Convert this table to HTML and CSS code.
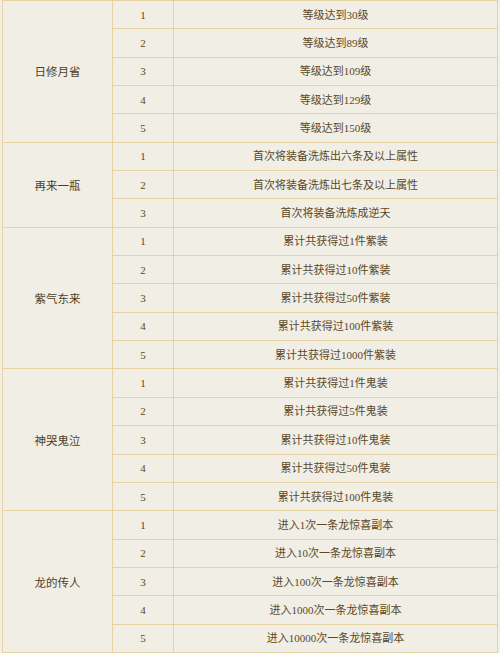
FILE: index.html
```html
<!DOCTYPE html>
<html lang="zh">
<head>
<meta charset="utf-8">
<title>成就</title>
<link rel="stylesheet" href="styles.css">
</head>
<body>
<table class="tbl">
  <tr><td class="name" rowspan="5">日修月省</td><td class="num">1</td><td class="desc">等级达到30级</td></tr>
  <tr><td class="num">2</td><td class="desc">等级达到89级</td></tr>
  <tr><td class="num">3</td><td class="desc">等级达到109级</td></tr>
  <tr><td class="num">4</td><td class="desc">等级达到129级</td></tr>
  <tr><td class="num">5</td><td class="desc">等级达到150级</td></tr>

  <tr><td class="name" rowspan="3">再来一瓶</td><td class="num">1</td><td class="desc">首次将装备洗炼出六条及以上属性</td></tr>
  <tr><td class="num">2</td><td class="desc">首次将装备洗炼出七条及以上属性</td></tr>
  <tr><td class="num">3</td><td class="desc">首次将装备洗炼成逆天</td></tr>

  <tr><td class="name" rowspan="5">紫气东来</td><td class="num">1</td><td class="desc">累计共获得过1件紫装</td></tr>
  <tr><td class="num">2</td><td class="desc">累计共获得过10件紫装</td></tr>
  <tr><td class="num">3</td><td class="desc">累计共获得过50件紫装</td></tr>
  <tr><td class="num">4</td><td class="desc">累计共获得过100件紫装</td></tr>
  <tr><td class="num">5</td><td class="desc">累计共获得过1000件紫装</td></tr>

  <tr><td class="name" rowspan="5">神哭鬼泣</td><td class="num">1</td><td class="desc">累计共获得过1件鬼装</td></tr>
  <tr><td class="num">2</td><td class="desc">累计共获得过5件鬼装</td></tr>
  <tr><td class="num">3</td><td class="desc">累计共获得过10件鬼装</td></tr>
  <tr><td class="num">4</td><td class="desc">累计共获得过50件鬼装</td></tr>
  <tr><td class="num">5</td><td class="desc">累计共获得过100件鬼装</td></tr>

  <tr><td class="name" rowspan="5">龙的传人</td><td class="num">1</td><td class="desc">进入1次一条龙惊喜副本</td></tr>
  <tr><td class="num">2</td><td class="desc">进入10次一条龙惊喜副本</td></tr>
  <tr><td class="num">3</td><td class="desc">进入100次一条龙惊喜副本</td></tr>
  <tr><td class="num">4</td><td class="desc">进入1000次一条龙惊喜副本</td></tr>
  <tr><td class="num">5</td><td class="desc">进入10000次一条龙惊喜副本</td></tr>
</table>
</body>
</html>
```

FILE: styles.css
```css
html, body {
  margin: 0;
  padding: 0;
  background: #f1eee6;
}
body {
  padding: 0 2px;
  font-family: "Liberation Serif", "Noto Sans CJK SC", serif;
  color: #5a4826;
}
.tbl {
  width: 496px;
  border-collapse: collapse;
  border: 1px solid #e7d3a2;
  table-layout: fixed;
}
.tbl tr {
  height: 28.35px;
}
.tbl td {
  border: 1px solid #e7d3a2;
  padding: 0;
  text-align: center;
  vertical-align: middle;
  font-size: 11px;
  line-height: 14px;
  background: #f1eee6;
}
.tbl .name {
  width: 109px;
  font-family: "Noto Sans CJK SC", sans-serif;
  font-size: 11.5px;
  color: #4f3f1e;
}
.tbl .num {
  width: 60px;
}
```
